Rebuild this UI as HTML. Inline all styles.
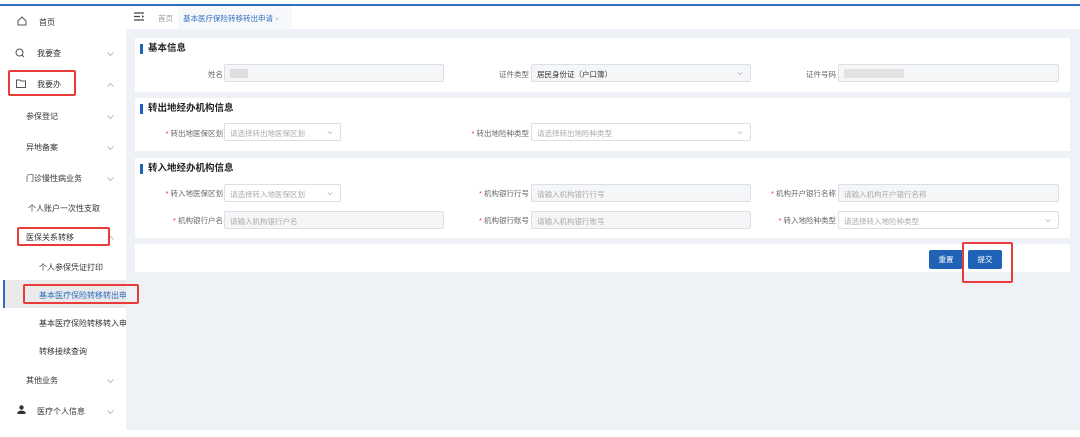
<!DOCTYPE html>
<html><head><meta charset="utf-8"><style>
*{margin:0;padding:0;box-sizing:border-box}
body{width:1080px;height:437px;background:#fff;font-family:"Liberation Sans","Noto Sans CJK SC",sans-serif;font-size:8px;color:#333;position:relative;overflow:hidden}
.a{position:absolute}
.topline{left:0;top:4px;width:1080px;height:2px;background:#2f6dc0}
.side{left:0;top:6px;width:126px;height:424px;background:#fff}
.main{left:126px;top:6px;width:954px;height:424px;background:#eef1f5}
.si{position:absolute;font-size:8px;color:#333;white-space:nowrap}
.chev{position:absolute;left:107px;width:7px;height:4px}
.panel{position:absolute;left:135px;width:935px;background:#fff}
.title{position:absolute;left:5px;top:6px;font-size:9.5px;font-weight:bold;color:#222;padding-left:5px;border-left:3px solid #1e62c0;line-height:10px}
.lbl{position:absolute;font-size:7.5px;color:#666;text-align:right;white-space:nowrap}
.lbl b{color:#e33;font-weight:normal}
.inp{position:absolute;height:18px;border:1px solid #dcdfe6;border-radius:2px;background:#f5f6f8;font-size:7.5px;color:#aaa;padding:4px 5px;white-space:nowrap}
.inp.w{background:#fff}
.inp .d{position:absolute;right:7px;top:7px;width:6px;height:3px}
.red{position:absolute;border:2px solid #ea3b3b;border-radius:2px}
.btn{position:absolute;top:6px;height:19px;width:34px;background:#1f62b6;color:#fff;font-size:7.5px;text-align:center;line-height:19px;border-radius:2px}
</style></head><body>
<svg width="0" height="0" style="position:absolute"><defs><symbol id="dn" viewBox="0 0 7 4"><path d="M0.5 0.5L3.5 3.5L6.5 0.5" fill="none" stroke="#aaa" stroke-width="0.8"/></symbol><symbol id="up" viewBox="0 0 7 4"><path d="M0.5 3.5L3.5 0.5L6.5 3.5" fill="none" stroke="#aaa" stroke-width="0.8"/></symbol></defs></svg>
<div class="a topline"></div>
<div class="a side">
<svg class="a" style="left:17px;top:10px" width="10" height="10" viewBox="0 0 10 10"><path d="M1 5L5 1L9 5V9H1Z" fill="none" stroke="#555" stroke-width="1"/></svg>
<div class="si" style="left:39px;top:11px">首页</div>
<svg class="a" style="left:15px;top:42px" width="10" height="10" viewBox="0 0 10 10"><circle cx="4.5" cy="4.5" r="3.5" fill="none" stroke="#555"/><path d="M7 7L9 9" stroke="#555"/></svg>
<div class="si" style="left:37px;top:42px">我要查</div><svg class="chev" style="top:46px"><use href="#dn"/></svg>
<svg class="a" style="left:16px;top:73px" width="10" height="9" viewBox="0 0 10 9"><path d="M0.5 1H4L5 2H9.5V8.5H0.5Z" fill="none" stroke="#555"/></svg>
<div class="si" style="left:37px;top:73px">我要办</div><svg class="chev" style="top:77px"><use href="#up"/></svg>
<div class="si" style="left:26px;top:105px">参保登记</div><svg class="chev" style="top:109px"><use href="#dn"/></svg>
<div class="si" style="left:26px;top:136px">异地备案</div><svg class="chev" style="top:140px"><use href="#dn"/></svg>
<div class="si" style="left:26px;top:167px">门诊慢性病业务</div><svg class="chev" style="top:171px"><use href="#dn"/></svg>
<div class="si" style="left:28px;top:197px">个人账户一次性支取</div>
<div class="si" style="left:26px;top:226px">医保关系转移</div><svg class="chev" style="top:230px"><use href="#up"/></svg>
<div class="si" style="left:39px;top:256px">个人参保凭证打印</div>
<div class="a" style="left:3px;top:274px;width:123px;height:28px;background:#eaeaea;border-left:2px solid #2f6dc0"></div>
<div class="si" style="left:39px;top:284px;color:#2f6dc0;width:87px;overflow:hidden">基本医疗保险转移转出申请</div>
<div class="si" style="left:39px;top:312px;width:87px;overflow:hidden">基本医疗保险转移转入申请</div>
<div class="si" style="left:39px;top:340px">转移接续查询</div>
<div class="si" style="left:26px;top:369px">其他业务</div><svg class="chev" style="top:373px"><use href="#dn"/></svg>
<svg class="a" style="left:17px;top:399px" width="9" height="9" viewBox="0 0 9 9"><circle cx="4.5" cy="2.5" r="2.2" fill="#333"/><path d="M0.5 9V7Q4.5 4 8.5 7V9Z" fill="#333"/></svg>
<div class="si" style="left:37px;top:400px">医疗个人信息</div><svg class="chev" style="top:404px"><use href="#dn"/></svg>
</div>
<div class="a main"></div>
<div class="a" style="left:126px;top:6px;width:954px;height:23px;background:#fff"></div>
<svg class="a" style="left:134px;top:12px" width="11" height="9" viewBox="0 0 11 9"><path d="M0 1H10M0 4.5H6M0 8H10" stroke="#444" stroke-width="1.2"/><path d="M8 3L10 4.5L8 6Z" fill="#444"/></svg>
<div class="a" style="left:158px;top:13px;font-size:7.5px;color:#999">首页</div>
<div class="a" style="left:178px;top:6px;width:114px;height:23px;background:#f7f8fa"></div>
<div class="a" style="left:183px;top:13px;font-size:7.5px;color:#2f6dc0">基本医疗保险转移转出申请 <span style="color:#aaa;font-size:6px">×</span></div>

<div class="panel" style="top:38px;height:54px">
<div class="title">基本信息</div>
<div class="lbl" style="left:60px;top:31px;width:28px">姓名</div>
<div class="inp" style="left:89px;top:26px;width:220px"><span style="display:inline-block;width:18px;height:9px;background:#ddd"></span></div>
<div class="lbl" style="left:340px;top:31px;width:54px">证件类型</div>
<div class="inp" style="left:396px;top:26px;width:220px;color:#333">居民身份证（户口簿）<svg class="d"><use href="#dn"/></svg></div>
<div class="lbl" style="left:640px;top:31px;width:61px">证件号码</div>
<div class="inp" style="left:703px;top:26px;width:221px"><span style="display:inline-block;width:60px;height:9px;background:#e2e2e2"></span></div>
</div>

<div class="panel" style="top:98px;height:53px">
<div class="title">转出地经办机构信息</div>
<div class="lbl" style="left:20px;top:30px;width:68px"><b>*</b> 转出地医保区划</div>
<div class="inp w" style="left:89px;top:25px;width:117px">请选择转出地医保区划<svg class="d"><use href="#dn"/></svg></div>
<div class="lbl" style="left:320px;top:30px;width:74px"><b>*</b> 转出地险种类型</div>
<div class="inp w" style="left:396px;top:25px;width:220px">请选择转出地险种类型<svg class="d"><use href="#dn"/></svg></div>
</div>

<div class="panel" style="top:158px;height:80px">
<div class="title">转入地经办机构信息</div>
<div class="lbl" style="left:20px;top:30px;width:68px"><b>*</b> 转入地医保区划</div>
<div class="inp w" style="left:89px;top:26px;width:117px">请选择转入地医保区划<svg class="d"><use href="#dn"/></svg></div>
<div class="lbl" style="left:320px;top:30px;width:74px"><b>*</b> 机构银行行号</div>
<div class="inp" style="left:396px;top:26px;width:220px">请输入机构银行行号</div>
<div class="lbl" style="left:620px;top:30px;width:81px"><b>*</b> 机构开户银行名称</div>
<div class="inp" style="left:703px;top:26px;width:221px">请输入机构开户银行名称</div>
<div class="lbl" style="left:20px;top:57px;width:68px"><b>*</b> 机构银行户名</div>
<div class="inp" style="left:89px;top:53px;width:220px">请输入机构银行户名</div>
<div class="lbl" style="left:320px;top:57px;width:74px"><b>*</b> 机构银行账号</div>
<div class="inp" style="left:396px;top:53px;width:220px">请输入机构银行账号</div>
<div class="lbl" style="left:620px;top:57px;width:81px"><b>*</b> 转入地险种类型</div>
<div class="inp w" style="left:703px;top:53px;width:221px">请选择转入地险种类型<svg class="d"><use href="#dn"/></svg></div>
</div>

<div class="panel" style="top:244px;height:28px">
<div class="btn" style="left:794px">重置</div>
<div class="btn" style="left:833px">提交</div>
</div>

<div class="red" style="left:8px;top:70px;width:68px;height:26px"></div>
<div class="red" style="left:17px;top:227px;width:93px;height:19px"></div>
<div class="red" style="left:23px;top:284px;width:116px;height:20px"></div>
<div class="red" style="left:962px;top:242px;width:51px;height:41px"></div>
</body></html>
